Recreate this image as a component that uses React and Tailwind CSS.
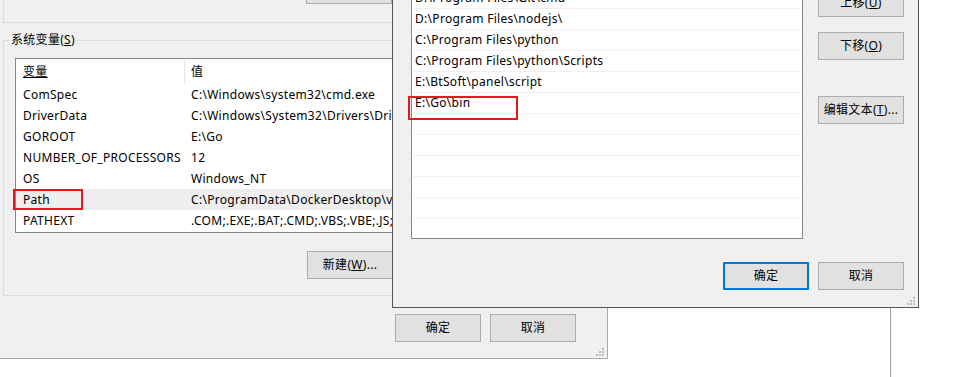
import React from 'react';

const Btn = ({ children, primary = false, className = '' }) => (
  <div
    className={`flex items-center justify-center w-[86px] h-[28px] shrink-0 bg-[#e1e1e1] text-[12px] ${
      primary ? 'border-2 border-[#0078d7]' : 'border border-[#adadad]'
    } ${className}`}
  >
    {children}
  </div>
);

const Grip = () => (
  <svg width="8" height="8" viewBox="0 0 8 8" className="absolute right-[3px] bottom-[2px]">
    <rect x="6" y="0" width="2" height="2" fill="#bdbdbd" />
    <rect x="3" y="3" width="2" height="2" fill="#bdbdbd" />
    <rect x="6" y="3" width="2" height="2" fill="#bdbdbd" />
    <rect x="0" y="6" width="2" height="2" fill="#bdbdbd" />
    <rect x="3" y="6" width="2" height="2" fill="#bdbdbd" />
    <rect x="6" y="6" width="2" height="2" fill="#bdbdbd" />
  </svg>
);

const sysVars = [
  ['ComSpec', 'C:\\Windows\\system32\\cmd.exe'],
  ['DriverData', 'C:\\Windows\\System32\\Drivers\\DriverData'],
  ['GOROOT', 'E:\\Go'],
  ['NUMBER_OF_PROCESSORS', '12'],
  ['OS', 'Windows_NT'],
  ['Path', 'C:\\ProgramData\\DockerDesktop\\version-bin;C:\\Windows\\system32'],
  ['PATHEXT', '.COM;.EXE;.BAT;.CMD;.VBS;.VBE;.JS;.JSE;.WSF;.WSH;.MSC'],
];

const pathItems = [
  'C:\\Windows\\system32',
  'C:\\Windows',
  'C:\\Windows\\System32\\Wbem',
  'D:\\Program Files\\Git\\cmd',
  'D:\\Program Files\\nodejs\\',
  'C:\\Program Files\\python',
  'C:\\Program Files\\python\\Scripts',
  'E:\\BtSoft\\panel\\script',
  'E:\\Go\\bin',
  '',
  '',
  '',
  '',
  '',
  '',
];

const EnvDialog = () => (
  <div className="absolute left-[-1px] top-[-30px] w-[609px] h-[389px] flex flex-col bg-[#f0f0f0] border border-[#aaaaaa]">
    {/* user variables group, only its lower edge is on screen */}
    <div className="ml-[3px] mr-[10px] h-[52px] shrink-0 border-l border-b border-[#dcdcdc] pt-[5px] pl-[302px]">
      <Btn />
    </div>

    {/* system variables group */}
    <div className="relative ml-[3px] mt-[17px] w-[594px] h-[256px] shrink-0 border border-[#dcdcdc] pt-[17px] pl-[11px]">
      <div className="absolute left-[5px] top-[-9px] px-[2px] h-[16px] leading-[16px] bg-[#f0f0f0]">
        系统变量(<u>S</u>)
      </div>
      <div className="relative w-[577px] h-[175px]">
        <div className="w-full h-full bg-white border border-[#828790] overflow-hidden whitespace-nowrap">
          <div className="flex items-center h-[25px]">
            <div className="flex items-center w-[169px] h-[23px] pl-[7px] border-r border-[#e5e5e5]">
              <u>变量</u>
            </div>
            <div className="pl-[6px]">值</div>
          </div>
          {sysVars.map(([name, value]) => (
            <div
              key={name}
              className={`flex items-center h-[21px] ${name === 'Path' ? 'bg-[#eeeeee]' : ''}`}
            >
              <div className="w-[169px] shrink-0 pl-[7px]">{name}</div>
              <div className="pl-[6px]">{value}</div>
            </div>
          ))}
        </div>
        <div className="absolute left-[-2px] top-[131px] w-[70px] h-[21px] border-2 border-[#e3191f]" />
      </div>
      <Btn className="mt-[18px] ml-[292px]">
        新建(<u>W</u>)...
      </Btn>
    </div>

    <div className="flex justify-end gap-[9px] mt-[18px] pr-[31px]">
      <Btn>确定</Btn>
      <Btn>取消</Btn>
    </div>
    <Grip />
  </div>
);

const EditPathDialog = () => (
  <div className="absolute left-[392px] top-[-100px] w-[527px] h-[408px] flex flex-col bg-[#f0f0f0] border border-[#555555]">
    <div className="flex mt-[23px] ml-[18px]">
      <div className="relative w-[392px] h-[315px] shrink-0">
        <div className="w-full h-full bg-white border border-[#828790] overflow-hidden whitespace-nowrap">
          {pathItems.map((p, i) => (
            <div
              key={i}
              className="flex items-center h-[21px] ml-px pl-[2px] border-b border-[#f0f0f0]"
            >
              {p}
            </div>
          ))}
        </div>
        <div className="absolute left-[-3px] top-[172px] w-[110px] h-[24px] border-2 border-[#e3191f]" />
      </div>
      <div className="flex flex-col ml-[15px] pt-[65px]">
        <Btn>上移(<u>U</u>)</Btn>
        <Btn className="mt-[15px]">下移(<u>O</u>)</Btn>
        <Btn className="mt-[36px]">编辑文本(<u>T</u>)...</Btn>
      </div>
    </div>
    <div className="flex justify-end gap-[9px] mt-[23px] pr-[14px]">
      <Btn primary>确定</Btn>
      <Btn>取消</Btn>
    </div>
    <Grip />
  </div>
);

export default function App() {
  return (
    <div className="relative w-[954px] h-[377px] overflow-hidden bg-white text-black text-[12px] tracking-[0.3px] font-['Noto_Sans','Noto_Sans_CJK_SC',sans-serif]">
      {/* edge of a window further behind */}
      <div className="absolute left-[890px] top-0 w-px h-full bg-[#a0a0a0]" />
      <EnvDialog />
      <EditPathDialog />
    </div>
  );
}
